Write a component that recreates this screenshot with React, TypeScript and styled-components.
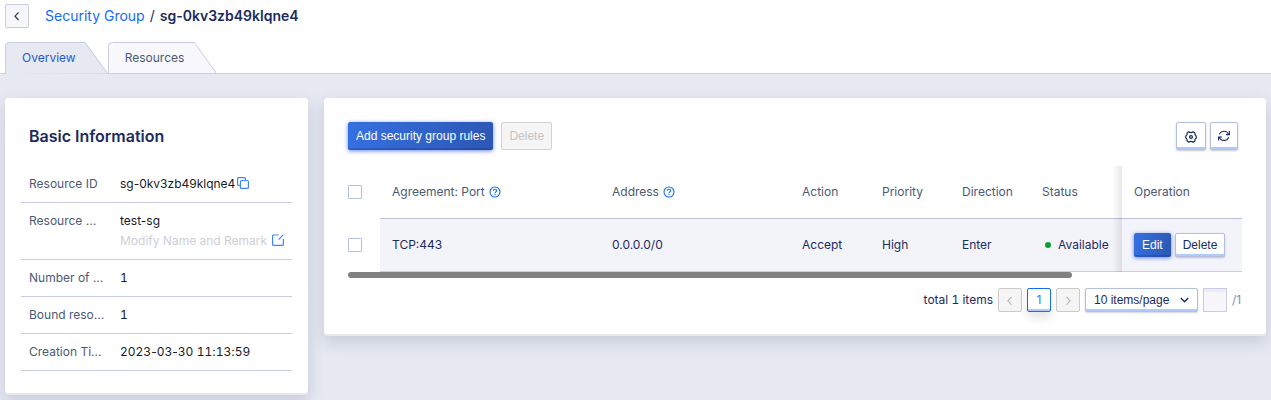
import React from "react";
import styled, { createGlobalStyle, css } from "styled-components";

const uiFont = `Inter, "Noto Sans", sans-serif`;
const controlFont = `"Liberation Sans", Arial, sans-serif`;

const GlobalStyle = createGlobalStyle`
  *, *::before, *::after { box-sizing: border-box; }
  html, body, #root { height: 100%; }
  body {
    margin: 0;
    overflow: hidden;
    background: #e6e9f2;
    color: #151b26;
    font: 12px/20px ${uiFont};
  }
`;

const Header = styled.header`
  background: #fff;
  border-bottom: 1px solid #c9cee6;
`;

const TitleBar = styled.div`
  display: flex;
  align-items: center;
  gap: 16px;
  height: 32px;
  padding: 0 5px;
`;

const BackButton = styled.button`
  display: grid;
  place-items: center;
  width: 24px;
  height: 24px;
  padding: 0;
  border: 1px solid #c9cce6;
  border-radius: 2px;
  background: #f7f7fb;
  color: #2a3550;
`;

const Breadcrumb = styled.nav`
  display: flex;
  gap: 5px;
  font-size: 14px;
  color: #1b2b5e;
`;

const CrumbLink = styled.a`
  color: #146bf5;
  text-decoration: none;
`;

const CrumbCurrent = styled.h1`
  margin: 0;
  font-size: 14px;
  font-weight: 600;
`;

const Tabs = styled.div`
  display: flex;
  margin: 10px 0 -1px;
  padding: 0 5px;
`;

const Tab = styled.button<{ $active?: boolean }>`
  position: relative;
  height: 32px;
  padding: 0 32px 0 17px;
  border: 0;
  background: none;
  font: 12px/20px ${uiFont};
  color: ${(p) => (p.$active ? "#1f5bd0" : "#4b5a73")};
`;

const TabShape = styled.svg`
  position: absolute;
  inset: 0;
  width: 100%;
  height: 100%;
  z-index: 0;
`;

const TabText = styled.span`
  position: relative;
`;

const Main = styled.main`
  display: flex;
  align-items: flex-start;
  gap: 16px;
  padding: 24px 5px 5px;
`;

const Card = styled.section`
  border-radius: 4px;
  background: #fff;
  box-shadow: inset 0 -2px 0 #e8e8e8, 0 6px 16px rgba(40, 50, 90, 0.17);
`;

const InfoCard = styled(Card)`
  flex: none;
  width: 303px;
  padding: 28px 16px 24px;
`;

const RulesCard = styled(Card)`
  flex: 1;
  min-width: 0;
  padding: 24px;
`;

const CardTitle = styled.h2`
  margin: 0 8px 20px;
  font-size: 16px;
  line-height: 20px;
  font-weight: 600;
  color: #1b2b5e;
`;

const InfoList = styled.dl`
  margin: 0;
`;

const InfoRow = styled.div`
  display: flex;
  padding: 8px;
  border-bottom: 1px solid #c9cce6;
`;

const InfoLabel = styled.dt`
  flex: none;
  width: 91px;
  color: #4b5a73;
`;

const InfoValue = styled.dd`
  flex: 1;
  margin: 0;
  white-space: nowrap;
`;

const ValueLine = styled.div<{ $spread?: boolean }>`
  display: flex;
  align-items: center;
  justify-content: ${(p) => (p.$spread ? "space-between" : "flex-start")};
  gap: 2px;
  color: ${(p) => (p.$spread ? "#cdcfd6" : "inherit")};
`;

const TabularDigits = styled.span`
  font-variant-numeric: tabular-nums;
`;

const IconButton = styled.button`
  display: grid;
  place-items: center;
  padding: 0 0 2px;
  border: 0;
  background: none;
  color: #3d86fa;
`;

const Toolbar = styled.div`
  display: flex;
  align-items: center;
  gap: 8px;
  margin-bottom: 16px;
`;

const ToolbarEnd = styled.div`
  display: flex;
  gap: 4px;
  margin: 0 4px 0 auto;
`;

const Button = styled.button<{ $primary?: boolean; $small?: boolean }>`
  height: ${(p) => (p.$small ? 24 : 28)}px;
  padding: 0 7px;
  border: 1px solid #b4c0dc;
  border-radius: 2px;
  background: #fff;
  color: #1b2b5e;
  font: 12px/16px ${controlFont};
  white-space: nowrap;
  box-shadow: inset 0 -2px 0 #b0cafa, 0 1px 2px rgba(30, 40, 80, 0.25);
  ${(p) =>
    p.$primary &&
    css`
      border: 0;
      padding: 0 8px;
      background: linear-gradient(100deg, #3670e0, #2c57b4);
      color: #fff;
      box-shadow: inset 0 -2px 0 rgba(20, 50, 130, 0.3), 0 1px 4px rgba(40, 80, 220, 0.7);
    `}
  &:disabled {
    border-color: #d2d2d2;
    background: #f5f5f5;
    color: #c4c4c4;
    box-shadow: none;
  }
`;

const SquareButton = styled(Button)<{ $width: number }>`
  display: grid;
  place-items: center;
  width: ${(p) => p.$width}px;
  padding: 0;
`;

const Table = styled.table`
  width: 100%;
  table-layout: fixed;
  border-collapse: separate;
  border-spacing: 0;
`;

const Col = styled.col<{ $width?: number }>`
  width: ${(p) => (p.$width ? `${p.$width}px` : "auto")};
`;

const cell = css`
  height: 53px;
  padding: 0 12px;
  text-align: left;
  font-weight: 400;
  white-space: nowrap;
  border-bottom: 1px solid #b8c2d9;
`;

const HeadCell = styled.th`
  ${cell}
  color: #4b5a73;
`;

const Cell = styled.td`
  ${cell}
  border-bottom-color: #c9cce6;
  background: #f3f4fa;
  color: #1b2b5e;
`;

const edgeShade = css`
  position: relative;
  &::before {
    content: "";
    position: absolute;
    top: 0;
    bottom: -1px;
    left: -10px;
    width: 10px;
    background: linear-gradient(to right, transparent, rgba(0, 0, 0, 0.09));
  }
`;

const HeadActionCell = styled(HeadCell)`
  ${edgeShade}
`;

const ActionCell = styled(Cell)`
  ${edgeShade}
`;

const CheckCell = styled.td`
  height: 53px;
  padding: 0 0 2px;
`;

const Checkbox = styled.input`
  appearance: none;
  display: block;
  width: 14px;
  height: 14px;
  margin: 0;
  border: 1px solid #b4c0dc;
  border-radius: 1px;
  background: #fff;
`;

const Inline = styled.span<{ $gap: number }>`
  display: flex;
  align-items: center;
  gap: ${(p) => p.$gap}px;
`;

const HelpIcon = styled.svg`
  color: #146bf5;
`;

const StatusDot = styled.span`
  width: 6px;
  height: 6px;
  margin-left: 3px;
  border-radius: 50%;
  background: #0a9f35;
`;

const ScrollThumb = styled.div`
  width: 81%;
  height: 6px;
  border-radius: 3px;
  background: #808080;
`;

const Pagination = styled.nav`
  display: flex;
  align-items: center;
  justify-content: flex-end;
  gap: 5px;
  margin-top: 10px;
  color: #1b2b5e;
`;

const PageButton = styled.button`
  display: grid;
  place-items: center;
  width: 24px;
  height: 24px;
  padding: 0;
  border: 1px solid #146bf5;
  border-radius: 2px;
  background: #fff;
  color: #2f7af5;
  font: 12px/20px ${uiFont};
  box-shadow: inset 0 -2px 0 #b0cafa, 0 6px 10px rgba(0, 0, 0, 0.1);
  &:disabled {
    border-color: #cbcbcb;
    background: #f5f5f5;
    color: #b8b8b8;
    box-shadow: none;
  }
`;

const SelectWrap = styled.span`
  position: relative;
  display: flex;
`;

const Select = styled.select`
  appearance: none;
  width: 113px;
  height: 24px;
  padding: 0 8px;
  border: 1px solid #b4c0dc;
  border-radius: 2px;
  background: #fff;
  color: #1b2b5e;
  font: 12px/20px ${controlFont};
  box-shadow: inset 0 -2px 0 #b0cafa, 0 1px 2px rgba(30, 40, 80, 0.2);
`;

const SelectArrow = styled.svg`
  position: absolute;
  right: 9px;
  top: 8px;
  pointer-events: none;
  color: #1b2b5e;
`;

const PageInput = styled.input`
  width: 24px;
  height: 24px;
  padding: 0 4px;
  border: 1px solid #c9cce6;
  border-radius: 0;
  background: #f7f7fb;
  box-shadow: inset 0 3px 0 #ebebf0;
`;

const PageTotal = styled.span`
  min-width: 10px;
  color: #8590a6;
`;

function Help() {
  return (
    <HelpIcon width="12" height="12" viewBox="0 0 12 12" fill="none" stroke="currentColor" aria-hidden="true">
      <circle cx="6" cy="6" r="5" strokeWidth="1.1" />
      <path d="M4.4 4.8C4.4 2.8 7.7 2.8 7.7 4.7C7.7 5.8 6 5.8 6 7.2M6 8V9" strokeWidth="1.1" />
    </HelpIcon>
  );
}

function Chevron({ d }: { d: string }) {
  return (
    <svg width="12" height="12" viewBox="0 0 12 12" fill="none" stroke="currentColor" strokeWidth="1.2" aria-hidden="true">
      <path d={d} />
    </svg>
  );
}

// Digits share one width; the separators keep their own.
function Timestamp({ value }: { value: string }) {
  return (
    <time dateTime={value}>
      {value.split(/(\d+)/).map((part, i) => (i % 2 ? <TabularDigits key={i}>{part}</TabularDigits> : part))}
    </time>
  );
}

function TabItem({ label, width, active }: { label: string; width: number; active?: boolean }) {
  return (
    <Tab role="tab" aria-selected={!!active} $active={active}>
      <TabShape viewBox={`0 0 ${width} 32`} preserveAspectRatio="none" aria-hidden="true">
        <path
          d={`M0.5 32V4.5Q0.5 0.5 4.5 0.5H${width - 22.5}L${width} 31.5`}
          fill={active ? "#e6e9f2" : "#f8f8fc"}
          stroke="#c9cce6"
        />
        {!active && <path d={`M0 31.5H${width}`} stroke="#c9cee6" />}
      </TabShape>
      <TabText>{label}</TabText>
    </Tab>
  );
}

export default function App() {
  return (
    <>
      <GlobalStyle />
      <Header>
        <TitleBar>
          <BackButton aria-label="Back">
            <Chevron d="M7.5 2.5L4 6.2L7.5 10" />
          </BackButton>
          <Breadcrumb aria-label="Breadcrumb">
            <CrumbLink href="#">Security Group</CrumbLink>
            <span>/</span>
            <CrumbCurrent>sg-0kv3zb49klqne4</CrumbCurrent>
          </Breadcrumb>
        </TitleBar>
        <Tabs role="tablist">
          <TabItem label="Overview" width={102} active />
          <TabItem label="Resources" width={109} />
        </Tabs>
      </Header>
      <Main>
        <InfoCard>
          <CardTitle>Basic Information</CardTitle>
          <InfoList>
            <InfoRow>
              <InfoLabel>Resource ID</InfoLabel>
              <InfoValue>
                <ValueLine>
                  sg-0kv3zb49klqne4
                  <IconButton aria-label="Copy">
                    <svg width="12" height="12" viewBox="0 0 12 12" fill="none" stroke="currentColor" strokeWidth="1.2" aria-hidden="true">
                      <rect x="3.5" y="3.5" width="7.9" height="7.9" rx="1" />
                      <path d="M3.5 8.4H1.6Q0.6 8.4 0.6 7.4V1.6Q0.6 0.6 1.6 0.6H7.4Q8.4 0.6 8.4 1.6V3.5" />
                    </svg>
                  </IconButton>
                </ValueLine>
              </InfoValue>
            </InfoRow>
            <InfoRow>
              <InfoLabel>Resource ...</InfoLabel>
              <InfoValue>
                <ValueLine>test-sg</ValueLine>
                <ValueLine $spread>
                  Modify Name and Remark
                  <IconButton aria-label="Edit name and remark">
                    <svg width="12" height="12" viewBox="0 0 12 12" fill="none" stroke="currentColor" strokeWidth="1.2" aria-hidden="true">
                      <path d="M6.5 1H1.6Q0.6 1 0.6 2V10.4Q0.6 11.4 1.6 11.4H10.4Q11.4 11.4 11.4 10.4V5M6.6 5.6L11.4 0.6" />
                    </svg>
                  </IconButton>
                </ValueLine>
              </InfoValue>
            </InfoRow>
            <InfoRow>
              <InfoLabel>Number of ...</InfoLabel>
              <InfoValue>
                <TabularDigits>1</TabularDigits>
              </InfoValue>
            </InfoRow>
            <InfoRow>
              <InfoLabel>Bound reso...</InfoLabel>
              <InfoValue>
                <TabularDigits>1</TabularDigits>
              </InfoValue>
            </InfoRow>
            <InfoRow>
              <InfoLabel>Creation Ti...</InfoLabel>
              <InfoValue>
                <Timestamp value="2023-03-30 11:13:59" />
              </InfoValue>
            </InfoRow>
          </InfoList>
        </InfoCard>
        <RulesCard>
          <Toolbar>
            <Button $primary>Add security group rules</Button>
            <Button disabled>Delete</Button>
            <ToolbarEnd>
              <SquareButton $width={30} aria-label="Settings">
                <svg width="12" height="13" viewBox="0 0 12 13" fill="none" stroke="currentColor" strokeWidth="1.2" strokeLinejoin="round" aria-hidden="true">
                  <path d="M3.8 1.8Q6 3.6 8.2 1.8L9.9 2.9Q9.4 5 11.3 6.2V7.8Q9.4 9 9.9 11.1L8.2 12.2Q6 10.4 3.8 12.2L2.1 11.1Q2.6 9 0.7 7.8V6.2Q2.6 5 2.1 2.9Z" />
                  <circle cx="6" cy="7" r="1.4" strokeWidth="1.3" />
                </svg>
              </SquareButton>
              <SquareButton $width={28} aria-label="Refresh">
                <svg width="12" height="12" viewBox="0 0 12 12" fill="none" stroke="currentColor" strokeWidth="1.1" aria-hidden="true">
                  <path d="M1.4 4.4A4.9 4.9 0 0 1 10.6 4.4M11.4 1V4.6H8M10.6 7.2A4.9 4.9 0 0 1 1.4 7.2M0.6 10.6V7H4" />
                </svg>
              </SquareButton>
            </ToolbarEnd>
          </Toolbar>
          <Table>
            <colgroup>
              <Col $width={32} />
              <Col $width={220} />
              <Col />
              <Col $width={80} />
              <Col $width={80} />
              <Col $width={80} />
              <Col $width={92} />
              <Col $width={120} />
            </colgroup>
            <thead>
              <tr>
                <CheckCell>
                  <Checkbox type="checkbox" aria-label="Select all rules" />
                </CheckCell>
                <HeadCell scope="col">
                  <Inline $gap={4}>Agreement: Port <Help /></Inline>
                </HeadCell>
                <HeadCell scope="col">
                  <Inline $gap={4}>Address <Help /></Inline>
                </HeadCell>
                <HeadCell scope="col">Action</HeadCell>
                <HeadCell scope="col">Priority</HeadCell>
                <HeadCell scope="col">Direction</HeadCell>
                <HeadCell scope="col">Status</HeadCell>
                <HeadActionCell scope="col">Operation</HeadActionCell>
              </tr>
            </thead>
            <tbody>
              <tr>
                <CheckCell>
                  <Checkbox type="checkbox" aria-label="Select rule TCP:443" />
                </CheckCell>
                <Cell>TCP:443</Cell>
                <Cell>0.0.0.0/0</Cell>
                <Cell>Accept</Cell>
                <Cell>High</Cell>
                <Cell>Enter</Cell>
                <Cell>
                  <Inline $gap={7}>
                    <StatusDot />
                    Available
                  </Inline>
                </Cell>
                <ActionCell>
                  <Inline $gap={4}>
                    <Button $primary $small>Edit</Button>
                    <Button $small>Delete</Button>
                  </Inline>
                </ActionCell>
              </tr>
            </tbody>
          </Table>
          <ScrollThumb />
          <Pagination aria-label="Pagination">
            <TabularDigits>total 1 items</TabularDigits>
            <PageButton disabled aria-label="Previous page">
              <Chevron d="M7.5 2.8L4 6.8L7.5 10.8" />
            </PageButton>
            <PageButton aria-current="page">1</PageButton>
            <PageButton disabled aria-label="Next page">
              <Chevron d="M4.5 2.8L8 6.8L4.5 10.8" />
            </PageButton>
            <SelectWrap>
              <Select aria-label="Items per page">
                <option>10 items/page</option>
              </Select>
              <SelectArrow width="9" height="8" viewBox="0 0 9 8" fill="none" stroke="currentColor" strokeWidth="1.4" aria-hidden="true">
                <path d="M0.8 2L4.5 5.7L8.2 2" />
              </SelectArrow>
            </SelectWrap>
            <PageInput type="text" aria-label="Go to page" />
            <PageTotal>/1</PageTotal>
          </Pagination>
        </RulesCard>
      </Main>
    </>
  );
}
